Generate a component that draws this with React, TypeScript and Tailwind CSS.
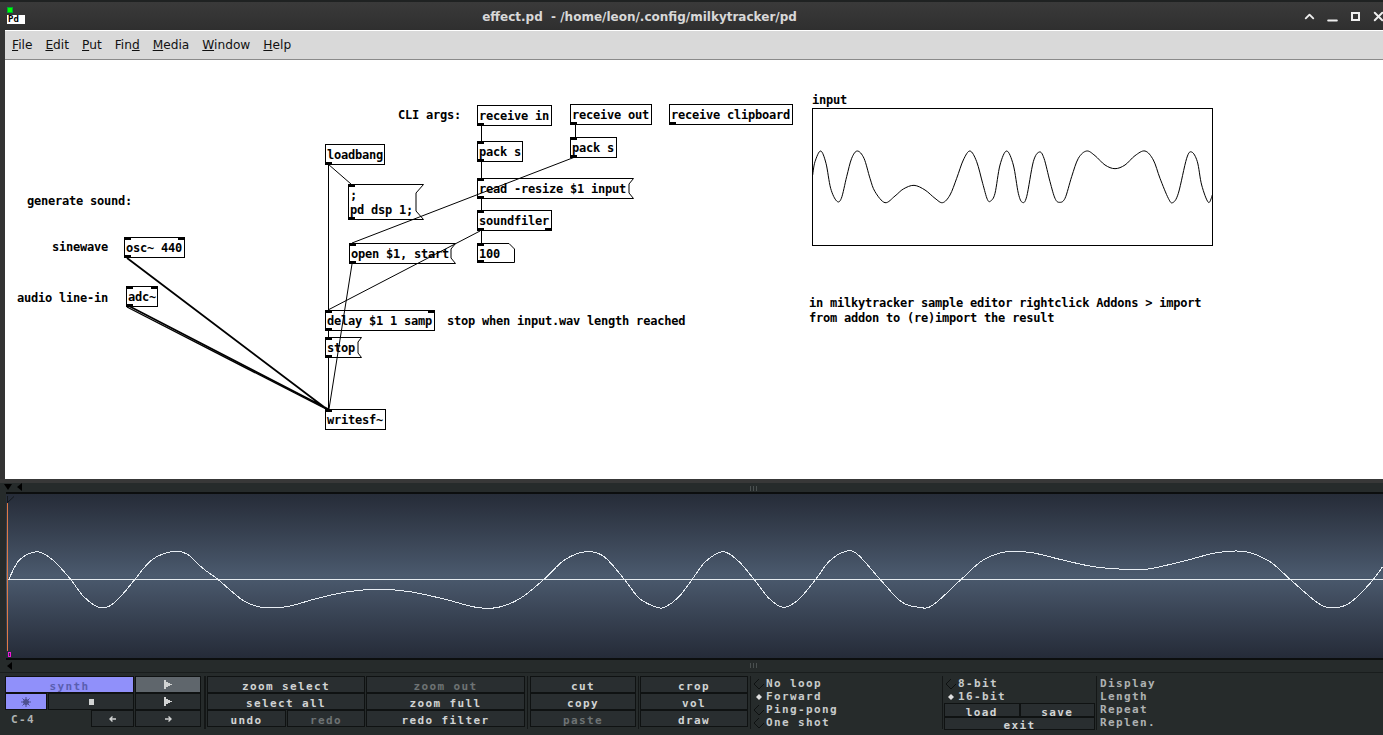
import type { ReactNode } from "react";
import { ChevronUp, Minus, X } from "lucide-react";

const mono = "font-['DejaVu_Sans_Mono',monospace] font-bold text-[12px] leading-[15px] tracking-[-0.22px] text-black";
const px = "font-['DejaVu_Sans_Mono',monospace] font-bold text-[11px] leading-[12px] tracking-[1.38px] whitespace-pre";

function smooth(p: number[][]) {
  let d = `M${p[0][0]} ${p[0][1]}`;
  for (let i = 0; i < p.length - 1; i++) {
    const a = p[Math.max(i - 1, 0)];
    const b = p[i];
    const c = p[i + 1];
    const e = p[Math.min(i + 2, p.length - 1)];
    d += ` C${b[0] + (c[0] - a[0]) / 6} ${b[1] + (c[1] - a[1]) / 6} ${c[0] - (e[0] - b[0]) / 6} ${c[1] - (e[1] - b[1]) / 6} ${c[0]} ${c[1]}`;
  }
  return d;
}

// traced from the array, canvas coords
const arrayWave = [
  [38, 255], [45, 215], [62, 183], [78, 220], [92, 295], [110, 333], [124, 325], [140, 260], [155, 205], [172, 183],
  [192, 205], [210, 265], [225, 305], [255, 338], [285, 318], [310, 297], [342, 286], [375, 300], [405, 325], [428, 338],
  [450, 315], [470, 265], [490, 210], [510, 183], [530, 215], [548, 280], [562, 328], [572, 333], [585, 310], [600, 225],
  [620, 183], [640, 225], [655, 310], [667, 337], [680, 320], [700, 215], [718, 186], [732, 205], [750, 275], [765, 325],
  [778, 337], [795, 325], [815, 260], [835, 205], [860, 183], [885, 197], [915, 225], [945, 236], [975, 225], [1005, 197],
  [1035, 183], [1060, 210], [1080, 265], [1105, 325], [1118, 338], [1135, 310], [1160, 205], [1175, 186], [1192, 215],
  [1205, 285], [1225, 337], [1237, 315],
].map(([x, y]) => [800 + x / 3 - 6, 90 + y / 3 - 60]);

const sampleWave = [
  [10, 118], [22, 60], [42, 35], [60, 60], [80, 118], [95, 170], [112, 202], [125, 197], [140, 160], [153, 118], [172, 60],
  [195, 35], [212, 42], [230, 85], [247, 118], [275, 180], [297, 202], [325, 200], [360, 175], [395, 155], [430, 148],
  [465, 155], [505, 178], [540, 202], [565, 202], [590, 175], [617, 118], [640, 60], [665, 35], [685, 50], [708, 118],
  [725, 175], [745, 202], [755, 200], [770, 170], [785, 118], [800, 65], [820, 35], [838, 65], [855, 118], [872, 175],
  [888, 202], [905, 180], [925, 118], [940, 65], [958, 35], [972, 42], [998, 118], [1022, 185], [1042, 202], [1058, 195],
  [1090, 118], [1115, 60], [1142, 35], [1170, 38], [1205, 60], [1240, 80], [1275, 88], [1300, 88], [1340, 65], [1380, 38],
  [1412, 35], [1440, 65], [1463, 118], [1495, 190], [1512, 203], [1530, 190], [1552, 135], [1568, 80],
].map(([x, y]) => [x / 1.134, y / 3 + 46]);

function Inlets({ w, top = [0], bottom = [0] }: { w: number; top?: number[]; bottom?: number[] }) {
  return (
    <>
      {top.map((x) => (
        <span key={`t${x}`} className="absolute -top-px h-[3px] w-[7px] bg-black" style={{ left: x === -1 ? w - 8 : -1 }} />
      ))}
      {bottom.map((x) => (
        <span key={`b${x}`} className="absolute -bottom-px h-[3px] w-[7px] bg-black" style={{ left: x === -1 ? w - 8 : -1 }} />
      ))}
    </>
  );
}

function Obj({ x, y, w, h = 21, text, top, bottom }: { x: number; y: number; w: number; h?: number; text: string; top?: number[]; bottom?: number[] }) {
  return (
    <div className={`absolute border border-black bg-white pl-px pt-[3px] whitespace-pre ${mono}`} style={{ left: x, top: y, width: w, height: h }}>
      {text}
      <Inlets w={w} top={top} bottom={bottom} />
    </div>
  );
}

function Msg({ x, y, w, h = 21, notch = 5, text }: { x: number; y: number; w: number; h?: number; notch?: number; text: string }) {
  return (
    <div className={`absolute bg-white pl-[2px] pt-[4px] whitespace-pre ${mono}`} style={{ left: x, top: y, width: w, height: h }}>
      <svg className="absolute left-0 top-0" width={w} height={h}>
        <path d={`M.5 .5H${w - .5}L${w - notch} ${notch + 1}V${h - notch - 1}L${w - .5} ${h - .5}H.5Z`} fill="none" stroke="#000" />
      </svg>
      <span className="relative">{text}</span>
      <span className="absolute left-0 top-0 h-[3px] w-[7px] bg-black" />
      <span className="absolute bottom-0 left-0 h-[3px] w-[7px] bg-black" />
    </div>
  );
}

function Num({ x, y, w, h, text }: { x: number; y: number; w: number; h: number; text: string }) {
  return (
    <div className={`absolute bg-white pl-[2px] pt-[4px] ${mono}`} style={{ left: x, top: y, width: w, height: h }}>
      <svg className="absolute left-0 top-0" width={w} height={h}>
        <path d={`M.5 .5H${w - 6}L${w - .5} 6V${h - .5}H.5Z`} fill="none" stroke="#000" />
      </svg>
      <span className="relative">{text}</span>
      <span className="absolute left-0 top-0 h-[3px] w-[7px] bg-black" />
      <span className="absolute bottom-0 left-0 h-[3px] w-[7px] bg-black" />
    </div>
  );
}

function Label({ x, y, children }: { x: number; y: number; children: ReactNode }) {
  return (
    <div className={`absolute whitespace-pre ${mono}`} style={{ left: x, top: y }}>
      {children}
    </div>
  );
}

function PdCanvas() {
  return (
    <div className="h-[419px] flex-1 overflow-hidden bg-white pl-px">
      {/* nodes sit on a free canvas, origin at (6,60) */}
      <div className="relative h-full">
        <Label x={392} y={48}>CLI args:</Label>
        <Obj x={471} y={45} w={75} text="receive in" top={[]} />
        <Obj x={564} y={44} w={82} text="receive out" top={[]} />
        <Obj x={663} y={44} w={124} text="receive clipboard" top={[]} />
        <Obj x={471} y={81} w={46} text="pack s" />
        <Obj x={564} y={77} w={47} text="pack s" />
        <Obj x={319} y={84} w={60} text="loadbang" top={[]} />
        <Msg x={342} y={124} w={76} h={36} notch={8} text={";\npd dsp 1;"} />
        <Msg x={471} y={118} w={157} text="read -resize $1 input" />
        <Obj x={471} y={150} w={75} text="soundfiler" bottom={[0, -1]} />
        <Msg x={343} y={183} w={107} text="open $1, start" />
        <Num x={471} y={183} w={38} h={20} text="100" />
        <Label x={21} y={134}>generate sound:</Label>
        <Label x={46} y={180}>sinewave</Label>
        <Label x={11} y={231}>audio line-in</Label>
        <Obj x={118} y={177} w={61} text="osc~ 440" top={[0, -1]} />
        <Obj x={120} y={226} w={32} text="adc~" top={[0, -1]} />
        <Obj x={319} y={250} w={110} text="delay $1 1 samp" top={[0, -1]} />
        <Label x={441} y={254}>stop when input.wav length reached</Label>
        <Msg x={319} y={277} w={37} notch={4} text="stop" />
        <Obj x={319} y={349} w={61} text="writesf~" bottom={[]} />

        <Label x={806} y={33}>input</Label>
        <div className="absolute border border-black" style={{ left: 806, top: 48, width: 401, height: 138 }} />
        <Label x={803} y={236}>{"in milkytracker sample editor rightclick Addons > import\nfrom addon to (re)import the result"}</Label>

        <svg className="absolute left-0 top-0" width="1383" height="420" fill="none" stroke="#000">
          <path d={smooth(arrayWave)} />
          <path d="M475.5 66V81M475.5 102V118M475.5 139V150M475.5 171V183" />
          <path d="M569.5 65V77M322.5 104V250M322 104L345 124M322.5 271V277M322.5 298V349" />
          <path d="M569 97L346 183M474 171L322 250M346 204L323 349" />
          <path d="M121 198L322 350M121 245L322 349" strokeWidth="1.8" />
          <path d="M121 247L322 350" strokeWidth="1.4" />
        </svg>
      </div>
    </div>
  );
}

function Play({ fill = "#d2d4d4" }: { fill?: string }) {
  return (
    <svg width="8" height="9" viewBox="0 0 8 9" className="mt-[-5px]">
      <path d="M0 0H2V2H4V3H6V4H8V5H6V6H4V7H2V9H0Z" fill={fill} />
    </svg>
  );
}

function PixArrow({ d }: { d: string }) {
  return (
    <svg width="9" height="8" viewBox="0 0 9 8" fill="none" stroke="#d2d4d4" strokeWidth="1.4" className="mt-[-5px]">
      <path d={d} />
    </svg>
  );
}

function Btn({ children, className = "", dim = false, hi = false }: { children: ReactNode; className?: string; dim?: boolean; hi?: boolean }) {
  return (
    <div
      className={`flex h-[17px] items-center justify-center border border-[#0f1212] pt-[5px] ${hi ? "bg-[#5f666c]" : "bg-[#292e30]"} ${dim ? "text-[#6e7374]" : "text-[#d2d4d4]"} ${px} ${className}`}
    >
      {children}
    </div>
  );
}

function Radio({ label, on = false }: { label: string; on?: boolean }) {
  return (
    <div className="flex h-[13px] items-center">
      <span className="flex w-[15px] items-center justify-center">
        <svg width="12" height="12" viewBox="0 0 12 12">
          {on ? <path d="M6 3L9 6L6 9L3 6Z" fill="#e0e0e0" /> : <path d="M1 6L6 1M1 6L6 11L11 6" fill="none" stroke="#0e1111" />}
        </svg>
      </span>
      <span className={`${px} text-[#c9cccc]`}>{label}</span>
    </div>
  );
}

function Panel() {
  return (
    <div className="flex h-[60px] items-start bg-[#262b2b] pl-[5px] pt-[2px]">
      <div className="grid w-[196px] grid-cols-[42px_42px_43px_66px] gap-x-px">
        <div className={`col-span-3 flex h-[17px] items-center justify-center border border-[#101010] bg-[#9090fa] pt-[5px] text-[#5a5eb0] ${px}`}>synth</div>
        <Btn hi><Play /></Btn>
        <div className="flex h-[17px] items-center justify-center border border-[#101010] bg-[#9090fa] text-[#4d5090]">
          <svg width="12" height="12" viewBox="0 0 12 12" stroke="currentColor">
            <path d="M6 1V11M1 6H11M2.5 2.5L9.5 9.5M9.5 2.5L2.5 9.5" />
            <circle cx="6" cy="6" r="2.5" fill="currentColor" />
          </svg>
        </div>
        <Btn className="col-span-2">
          <span className="mt-[-5px] h-[6px] w-[5px] bg-[#d2d4d4]" />
        </Btn>
        <Btn><Play /></Btn>
        <div className={`col-span-2 flex h-[17px] items-center pl-[6px] pt-[2px] text-[#aeb2b2] ${px}`}>C-4</div>
        <Btn><PixArrow d="M8 4H2M4.5 1.5L2 4L4.5 6.5" /></Btn>
        <Btn><PixArrow d="M1 4H7M4.5 1.5L7 4L4.5 6.5" /></Btn>
      </div>
      <div className="ml-[3px] mr-[1px] h-[53px] w-[2px] bg-[#141717]" />
      <div className="grid w-[318px] grid-cols-[79px_78px_159px] gap-x-px">
        <Btn className="col-span-2">zoom select</Btn>
        <Btn dim>zoom out</Btn>
        <Btn className="col-span-2">select all</Btn>
        <Btn>zoom full</Btn>
        <Btn>undo</Btn>
        <Btn dim>redo</Btn>
        <Btn>redo filter</Btn>
      </div>
      <div className="mx-[2px] h-[53px] w-px bg-[#141717]" />
      <div className="flex w-[106px] flex-col">
        <Btn>cut</Btn>
        <Btn>copy</Btn>
        <Btn dim>paste</Btn>
      </div>
      <div className="ml-[2px] mr-px h-[53px] w-px bg-[#141717]" />
      <div className="flex w-[108px] flex-col">
        <Btn>crop</Btn>
        <Btn>vol</Btn>
        <Btn>draw</Btn>
      </div>
      <div className="ml-[2px] h-[53px] w-px bg-[#141717]" />
      <div className="w-[192px] border-r border-[#141717] pt-px">
        <Radio label="No loop" />
        <Radio label="Forward" on />
        <Radio label="Ping-pong" />
        <Radio label="One shot" />
      </div>
      <div className="w-[154px] border-r border-[#141717] pt-px">
        <Radio label="8-bit" />
        <Radio label="16-bit" on />
        <div className="ml-px grid w-[151px] grid-cols-2">
          <Btn className="!h-[14px]">load</Btn>
          <Btn className="!h-[14px]">save</Btn>
          <Btn className="col-span-2 !h-[13px]">exit</Btn>
        </div>
      </div>
      <div className={`pl-[3px] pt-px text-[#aeb2b2] ${px}`}>
        {["Display", "Length", "Repeat", "Replen."].map((t) => (
          <div key={t} className="flex h-[13px] items-center">{t}</div>
        ))}
      </div>
    </div>
  );
}

function Arrow({ d }: { d: string }) {
  return (
    <svg width="8" height="9" viewBox="0 0 8 9" fill="#000">
      <path d={d} />
    </svg>
  );
}

function Grip() {
  return <span className="absolute left-[750px] top-[3px] h-[5px] w-[7px] border-x border-[#4a5050] after:absolute after:left-[2px] after:h-[5px] after:w-px after:bg-[#4a5050]" />;
}

function Tracker() {
  return (
    <div className="flex flex-1 flex-col bg-[#262b2b]">
      <div className="relative flex h-[9px] items-center gap-[4px] pl-[4px]">
        <Arrow d="M0 1H8L4 7Z" />
        <Arrow d="M6 0V8L1 4Z" />
        <Grip />
      </div>
      <div className="relative ml-[6px] h-[168px] border-y-2 border-[#0c0e0e] bg-gradient-to-b from-[#262c38] via-[#4b5a6e] to-[#252b38]">
        <div className="absolute bottom-[7px] left-px top-[9px] w-px bg-[#e07a45]" />
        <svg className="absolute left-px top-[2px]" width="8" height="8" fill="none" stroke="#14181c">
          <path d="M0 7L7 .5M.5 0V7" />
        </svg>
        <div className="absolute left-[2px] right-0 top-[85px] h-px bg-[#e6ebf0]" />
        <svg className="absolute left-[-6px] top-0" width="1383" height="164" fill="none">
          <path d={smooth(sampleWave)} stroke="#e8eef4" strokeWidth="1" shapeRendering="crispEdges" />
        </svg>
        <span className="absolute bottom-[1px] left-[2px] h-[5px] w-[3px] border border-[#f018d8]" />
      </div>
      <div className="relative flex h-[12px] items-center pl-[6px]">
        <Arrow d="M6 0V8L1 4Z" />
        <Grip />
      </div>
      <div className="h-[1px] bg-[#191d1d]" />
      <div className="h-px bg-[#262b2b]" />
      <Panel />
    </div>
  );
}

export default function App() {
  return (
    <div className="flex h-[735px] w-[1383px] flex-col overflow-hidden bg-[#333]">
      <div className="relative flex h-[30px] items-center justify-center border-t-2 border-[#1f2222] bg-gradient-to-b from-[#3a3a3a] to-[#2f2f2f] pt-px">
        <span className="absolute left-[7px] top-[5px] h-[6px] w-[6px] border border-[#0a3] bg-[#0f0]" />
        <span className="absolute left-[7px] top-[13px] h-[9px] w-[18px] bg-white pl-px font-['DejaVu_Sans_Mono',monospace] text-[9px] font-bold leading-[9px] text-black">Pd</span>
        <span className="ml-[-104px] whitespace-pre font-['DejaVu_Sans',sans-serif] text-[12px] font-bold text-[#d8d8d8]">effect.pd  - /home/leon/.config/milkytracker/pd</span>
        <div className="absolute -right-[7px] top-[7px] flex items-center text-[#eee]">
          <span className="flex w-[23px] justify-center"><ChevronUp size={15} strokeWidth={3} /></span>
          <span className="flex w-[23px] justify-center"><Minus size={15} strokeWidth={3} className="translate-y-[4px]" /></span>
          <span className="flex w-[23px] justify-center"><span className="h-[9px] w-[9px] border-2 border-[#eee]" /></span>
          <span className="flex w-[23px] justify-center"><X size={15} strokeWidth={3} /></span>
        </div>
      </div>
      <div className="ml-[5px] flex h-[30px] items-center gap-[13px] border-y border-t-white border-b-[#8a8a8a] bg-[#d9d9d9] pl-[7px] font-['DejaVu_Sans',sans-serif] text-[12.2px] text-[#111]">
        <span><u>F</u>ile</span>
        <span><u>E</u>dit</span>
        <span><u>P</u>ut</span>
        <span>Fin<u>d</u></span>
        <span><u>M</u>edia</span>
        <span><u>W</u>indow</span>
        <span><u>H</u>elp</span>
      </div>
      <div className="flex pl-[5px]">
        <PdCanvas />
      </div>
      <div className="h-[4px] bg-[#383838]" />
      <Tracker />
    </div>
  );
}
